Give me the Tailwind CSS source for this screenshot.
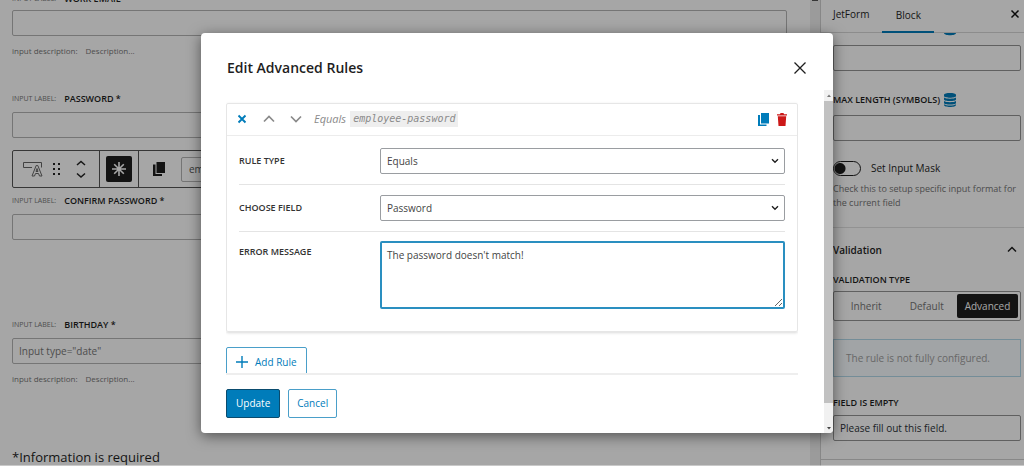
<!DOCTYPE html>
<html lang="en">
<head>
<meta charset="utf-8">
<title>Edit Advanced Rules</title>
<script src="https://cdn.jsdelivr.net/npm/@tailwindcss/browser@4"></script>
</head>
<body class="relative h-screen overflow-hidden bg-white font-['Open_Sans','Noto_Sans',sans-serif] text-[10px] leading-4 text-[#1e1e1e]">
<div class="flex h-full">
  <!-- Form editor canvas -->
  <main class="relative h-full min-w-0 flex-1 overflow-hidden pl-3 pr-[33px]">
    <section class="-mt-[9px]">
      <div class="flex items-center gap-2"><span class="text-[7px] text-[#777]">INPUT LABEL:</span><label for="email" class="text-[9px] font-semibold">WORK EMAIL *</label></div>
      <input id="email" class="mt-[3px] block h-[26px] w-full rounded-xs border border-[#b4b4b4] px-1.5">
      <p class="mt-[7px] flex gap-2 text-[8px] text-[#777]"><span>input description:</span><span>Description...</span></p>
    </section>
    <section class="mt-8">
      <div class="flex items-center gap-2"><span class="text-[7px] text-[#777]">INPUT LABEL:</span><label for="pass" class="text-[9px] font-semibold">PASSWORD *</label></div>
      <input id="pass" class="mt-[5px] block h-[26px] w-full rounded-xs border border-[#b4b4b4] px-1.5">
      <p class="mt-[7px] flex gap-2 text-[8px] text-[#777]"><span>input description:</span><span>Description...</span></p>
    </section>
    <section class="mt-8">
      <div class="flex items-center gap-2"><span class="text-[7px] text-[#777]">INPUT LABEL:</span><label for="confirm" class="text-[9px] font-semibold">CONFIRM PASSWORD *</label></div>
      <input id="confirm" class="mt-[5px] block h-[26px] w-full rounded-xs border border-[#b4b4b4] px-1.5">
    </section>
    <section class="mt-[77px]">
      <div class="flex items-center gap-2"><span class="text-[7px] text-[#777]">INPUT LABEL:</span><label for="birthday" class="text-[9px] font-semibold">BIRTHDAY *</label></div>
      <input id="birthday" placeholder="Input type=&quot;date&quot;" class="mt-[5px] block h-[26px] w-full rounded-xs border border-[#b4b4b4] px-1.5 placeholder:text-[#777]">
      <p class="mt-[7px] flex gap-2 text-[8px] text-[#777]"><span>input description:</span><span>Description...</span></p>
    </section>
    <p class="mt-[60px] text-[13px] leading-5">*Information is required</p>

    <!-- Floating block toolbar -->
    <div class="absolute left-3 top-[150px] flex h-[38px] w-[320px] items-stretch rounded-xs border border-[#555] bg-white">
      <div class="flex w-[87px] items-center border-r border-[#555] pl-2.5">
        <button aria-label="Text field" class="w-5"><svg class="h-4 w-5" viewBox="0 0 20 16" fill="none" stroke="#666" stroke-width="1"><path d="M9 6.500H.5v-5h18v5"/><path d="M9 15l4.200-10.500h1.600L19 15h-2.500l-1-2.500h-3l-1 2.500zM13 10.500h2L14 7.500z" fill="#fff"/></svg></button>
        <button aria-label="Drag" class="ml-2.5 w-2"><svg class="h-3 w-2" viewBox="0 0 8 12" fill="#222"><path d="M0 0h2v2H0zM5 0h2v2H5zM0 5h2v2H0zM5 5h2v2H5zM0 10h2v2H0zM5 10h2v2H5z"/></svg></button>
        <button aria-label="Move up or down" class="ml-[15px] w-2.5"><svg class="h-5 w-2.5" viewBox="0 0 10 20" fill="none" stroke="#222" stroke-width="1.500"><path d="M1 6l4-3.500L9 6M1 14.500L5 18l4-3.500"/></svg></button>
      </div>
      <div class="flex w-[39px] items-center justify-center border-r border-[#555]">
        <button aria-label="Required" class="flex size-[26px] items-center justify-center rounded-xs bg-[#1e1e1e]"><svg class="size-4" viewBox="0 0 16 16" fill="none" stroke="#fff" stroke-width="1.600"><path d="M8 1v14M1 8h14M3.200 3.200l9.600 9.600M12.800 3.200l-9.600 9.600"/></svg></button>
      </div>
      <div class="flex items-center pl-[14px]">
        <button aria-label="Duplicate"><svg class="h-3.5 w-3" viewBox="0 0 12 14" fill="#1e1e1e"><path d="M3.500 0H12v11H3.500zM0 2.500h2.500V12H9v2H0z"/></svg></button>
        <input aria-label="Field name" value="employee-password" class="ml-4 h-[25px] w-[130px] rounded-xs border border-[#b4b4b4] px-[7px] text-[#555]">
      </div>
    </div>
    <!-- Canvas scrollbar -->
    <div class="absolute inset-y-0 right-0 w-2.5 bg-[#eee]"><svg class="mx-auto h-1 w-1.5" viewBox="0 0 6 4" fill="#555"><path d="M0 0h6v1H0z"/></svg></div>
  </main>

  <!-- Settings sidebar -->
  <aside class="w-[204px] shrink-0 overflow-hidden border-l border-[#d0d0d0]">
    <div class="flex h-[33px] items-start border-b border-[#d8d8d8] pl-3 pr-1">
      <button class="h-8 pb-1 font-medium">JetForm</button>
      <button class="ml-[13px] h-[33px] w-[52px] border-b-2 border-[#007cba] pb-0.5 font-medium">Block</button>
      <button aria-label="Close settings" class="ml-auto flex h-7 items-center"><svg class="size-2.5" viewBox="0 0 10 10" stroke="#111" stroke-width="1.500"><path d="M1.500 1.500l7 7M8.500 1.500l-7 7"/></svg></button>
    </div>
    <div class="pl-3 pr-[3px]">
      <svg class="ml-[111px] h-[3px] w-3" viewBox="0 0 12 3" fill="#007cba"><path d="M0 0h12c0 3-12 3-12 0z"/></svg>
      <input aria-label="Min length" class="mt-[9px] block h-[26px] w-full rounded-xs border border-[#949494] px-1.5">
      <div class="mt-[21px] flex h-4 items-center gap-1">
        <label for="maxlen" class="text-[9px] font-semibold">MAX LENGTH (SYMBOLS)</label>
        <svg class="h-3.5 w-3" viewBox="0 0 12 14" fill="#007cba"><path d="M0 2c0-2.600 12-2.600 12 0v1c0 2.300-12 2.300-12 0zM0 4.500c2 1.600 10 1.600 12 0v2c0 2-12 2-12 0zM0 8c2 1.600 10 1.600 12 0v2c0 2-12 2-12 0zM0 11.300c2 1.600 10 1.600 12 0V12c0 2.600-12 2.600-12 0z"/></svg>
      </div>
      <input id="maxlen" class="mt-[7px] block h-[26px] w-full rounded-xs border border-[#949494] px-1.5">
      <label class="mt-[19px] flex h-4 items-center gap-2.5">
        <input type="checkbox" class="h-[15px] w-7 appearance-none rounded-full border border-[#1e1e1e] bg-[radial-gradient(circle_at_6px_50%,#1e1e1e_5px,transparent_6px)]">
        <span>Set Input Mask</span>
      </label>
      <p class="mt-1.5 text-[9px] leading-[14px] text-[#757575]">Check this to setup specific input format for the current field</p>
    </div>
    <div class="mt-[17px] border-t border-[#e0e0e0] pl-3 pr-[3px]">
      <button class="mt-3.5 flex h-4 w-full items-center justify-between pr-1 font-semibold"><span>Validation</span><svg class="h-2 w-2.5" viewBox="0 0 10 8" fill="none" stroke="#1e1e1e" stroke-width="1.500"><path d="M1 5.500l4-4 4 4"/></svg></button>
      <p class="mt-3.5 text-[9px] font-semibold">VALIDATION TYPE</p>
      <div class="mt-[3px] flex h-[30px] items-stretch rounded-xs border border-[#949494] p-0.5 text-[#757575]">
        <button class="flex-1">Inherit</button>
        <button class="flex-1">Default</button>
        <button class="w-[61px] rounded-xs bg-[#1e1e1e] text-white">Advanced</button>
      </div>
      <p class="mt-[18px] flex h-[38px] items-center border border-[#b3d9ea] bg-[#f8fcff] pl-3 text-[#a0a0a0]">The rule is not fully configured.</p>
      <label for="empty" class="mt-[18px] block text-[9px] font-semibold">FIELD IS EMPTY</label>
      <input id="empty" value="Please fill out this field." class="mt-1 block h-[26px] w-full rounded-xs border border-[#949494] px-1.5 text-[#2c3338]">
    </div>
    <div class="mt-[18px] border-t border-[#d0d0d0]"></div>
  </aside>
</div>

<!-- Modal -->
<div class="absolute inset-0 flex items-center justify-center border-b border-white/40 bg-black/35 pl-2.5">
  <div role="dialog" aria-labelledby="title" class="w-[632px] max-w-full overflow-hidden rounded-sm bg-white shadow-[0_3px_14px_rgba(0,0,0,0.5)]">
    <div class="flex h-[57px] items-center justify-between pl-[26px] pr-[27px] pt-3.5">
      <h1 id="title" class="text-[14px] font-semibold">Edit Advanced Rules</h1>
      <button aria-label="Close"><svg class="size-3" viewBox="0 0 12 12" stroke="#1e1e1e" stroke-width="1.300"><path d="M.5.5l11 11M11.500.5l-11 11"/></svg></button>
    </div>
    <div class="flex">
      <div class="min-w-0 flex-1 pl-[25px] pr-[26px]">
        <div class="h-[283px] overflow-hidden pt-[13px]">
          <div class="rounded-xs border border-[#e6e6e6] shadow-[0_1px_3px_rgba(0,0,0,0.15)]">
            <div class="flex h-8 items-center border-b border-[#ececec] pl-2.5 pr-2.5">
              <button aria-label="Collapse rule"><svg class="size-2.5" viewBox="0 0 10 10" stroke="#007cba" stroke-width="1.900"><path d="M1.500 1.500l7 7M8.500 1.500l-7 7"/></svg></button>
              <button aria-label="Move rule up" class="ml-4"><svg class="h-2.5 w-3" viewBox="0 0 12 10" fill="none" stroke="#8a8a8a" stroke-width="1.700"><path d="M1 7.500l5-5 5 5"/></svg></button>
              <button aria-label="Move rule down" class="ml-[15px]"><svg class="h-2.5 w-3" viewBox="0 0 12 10" fill="none" stroke="#8a8a8a" stroke-width="1.700"><path d="M1 2.500l5 5 5-5"/></svg></button>
              <em class="ml-3 text-[11px] text-[#8a8a8a]">Equals</em>
              <code class="ml-1 bg-[#eee] px-[3px] font-['DejaVu_Sans_Mono',monospace] text-[10px] italic text-[#8a8a8a]">employee-password</code>
              <button aria-label="Duplicate rule" class="ml-auto"><svg class="h-[13px] w-[11px]" viewBox="0 0 11 13" fill="#007cba"><path d="M3 0h8v10.500H3zM0 2h2v9.500h6.500V13H0z"/></svg></button>
              <button aria-label="Delete rule" class="ml-2"><svg class="h-[13px] w-2.5" viewBox="0 0 10 13" fill="#cc1818"><path d="M0 1.200h3L3.500 0h3L7 1.200h3v1.300H0zM.8 3.300h8.400L8.500 13h-7z"/></svg></button>
            </div>
            <div class="px-3">
              <div class="flex border-b border-[#e4e4e4] pb-2.5 pt-3">
                <label for="ruletype" class="w-[141px] pt-[5px] text-[9px] font-semibold text-[#333]">RULE TYPE</label>
                <div class="relative flex-1">
                  <select id="ruletype" class="block h-[26px] w-full appearance-none rounded-xs border border-[#9a9da1] bg-white px-1.5 text-[#444]"><option>Equals</option></select>
                  <svg class="pointer-events-none absolute right-1.5 top-2.5 h-1.5 w-2" viewBox="0 0 8 6" fill="none" stroke="#222" stroke-width="1.400"><path d="M1 1.300l3 3 3-3"/></svg>
                </div>
              </div>
              <div class="flex border-b border-[#e4e4e4] py-2.5">
                <label for="field" class="w-[141px] pt-[5px] text-[9px] font-semibold text-[#333]">CHOOSE FIELD</label>
                <div class="relative flex-1">
                  <select id="field" class="block h-[26px] w-full appearance-none rounded-xs border border-[#9a9da1] bg-white px-1.5 text-[#444]"><option>Password</option></select>
                  <svg class="pointer-events-none absolute right-1.5 top-2.5 h-1.5 w-2" viewBox="0 0 8 6" fill="none" stroke="#222" stroke-width="1.400"><path d="M1 1.300l3 3 3-3"/></svg>
                </div>
              </div>
              <div class="flex pb-[22px] pt-[9px]">
                <label for="message" class="w-[141px] pt-[3px] text-[9px] font-semibold text-[#333]">ERROR MESSAGE</label>
                <textarea id="message" class="block h-[68px] flex-1 rounded-xs border-2 border-[#2a8fc0] px-[5px] py-1 text-[#444] outline-none">The password doesn't match!</textarea>
              </div>
            </div>
          </div>
          <button class="mt-[15px] flex h-[30px] items-center gap-[7px] rounded-xs border border-[#4a9fc9] px-[9px] text-[#007cba]"><svg class="size-3" viewBox="0 0 12 12" stroke="#007cba" stroke-width="1.400"><path d="M6 0v12M0 6h12"/></svg>Add Rule</button>
        </div>
        <div class="flex gap-2 border-t-2 border-[#eee] pb-[15px] pt-3.5">
          <button class="h-[29px] rounded-xs border border-[#0a4b6e] bg-[#007cba] px-[9px] text-white">Update</button>
          <button class="h-[29px] rounded-xs border border-[#4a9fc9] px-2 text-[#007cba]">Cancel</button>
        </div>
      </div>
      <!-- Dialog scrollbar -->
      <div class="flex w-[9px] flex-col items-center bg-[#f1f1f1]">
        <svg class="h-[11px] w-2" viewBox="0 0 8 11" fill="#777"><path d="M2 7l2-2.500L6 7z"/></svg>
        <div class="w-full flex-1 bg-[#c1c1c1]"></div>
        <svg class="h-[30px] w-2" viewBox="0 0 8 30" fill="#444"><path d="M2 24l2 2.500L6 24z"/></svg>
      </div>
    </div>
  </div>
</div>
</body>
</html>
